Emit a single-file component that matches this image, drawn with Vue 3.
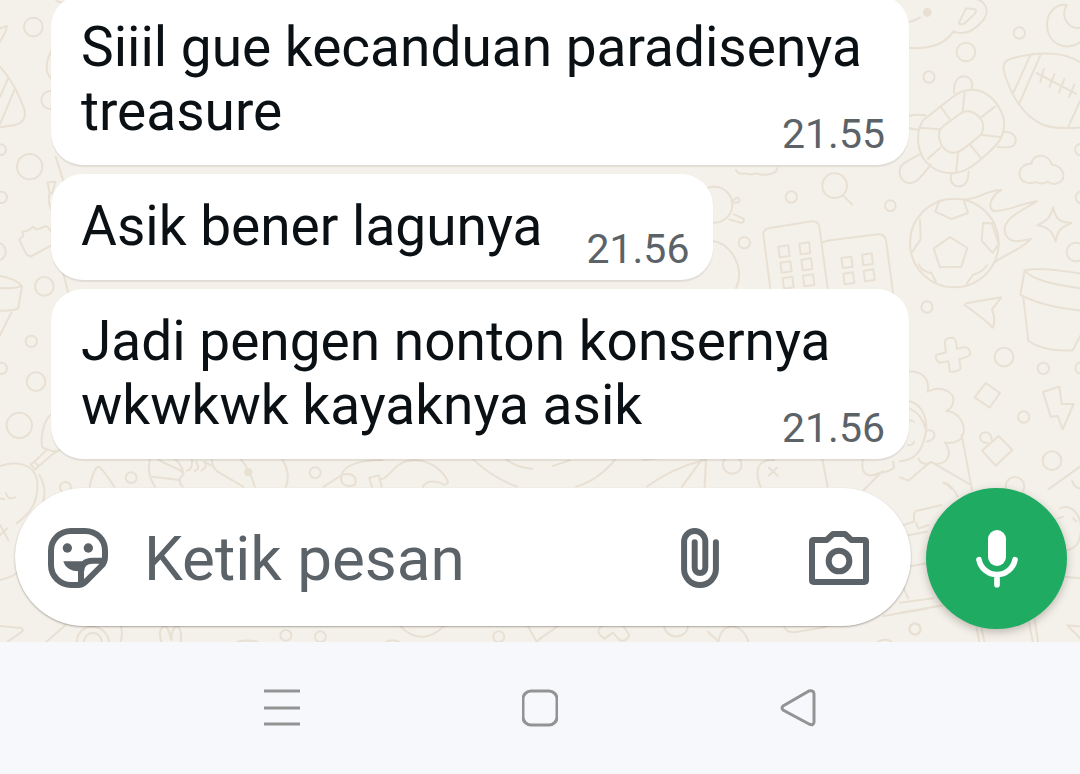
<script setup>
import { ref } from 'vue'

const draft = ref('')
const messages = [
  { id: 1, text: 'Siiil gue kecanduan paradisenya treasure', time: '21.55' },
  { id: 2, text: 'Asik bener lagunya', time: '21.56' },
  { id: 3, text: 'Jadi pengen nonton konsernya wkwkwk kayaknya asik', time: '21.56' },
]
</script>

<template>
  <div class="screen">
    <main class="chat">
      <svg class="wallpaper" viewBox="0 0 1080 642" preserveAspectRatio="xMaxYMax slice" aria-hidden="true">
        <!-- whale, football, moon, turtle, cloud -->
        <g transform="translate(900 0) scale(.33333)">
          <path d="M0 140C60 150 125 145 160 95C205 108 228 85 252 58C270 30 255 5 228 -4M28 65Q48 62 60 52M198 25L226 28Q230 32 224 42L194 70Q182 76 176 70Z" />
          <circle cx="82" cy="37" r="13" class="solid" />
          <circle cx="198" cy="156" r="28" /><circle cx="87" cy="231" r="17" /><circle cx="358" cy="99" r="17" />
          <path d="M500 15C465 10 440 42 441 76C445 145 515 155 550 118M500 15C480 50 505 92 545 82" />
          <path d="M550 195C500 150 405 155 330 177C307 185 308 205 315 225C335 285 365 345 430 375C465 387 505 386 550 382M390 168L341 276M421 166L358 310M410 219L527 281M431 208L421 247M463 222L449 260M493 237L477 277M523 253L507 291M550 282L504 382" />
          <path d="M70 360L155 293C190 265 235 258 275 294C310 330 322 370 304 412C290 440 260 463 230 488C180 530 120 530 80 488C50 455 45 395 70 360Z" />
          <path d="M130 378L182 340C205 325 235 340 247 365C255 392 245 405 218 425L187 449C160 467 137 458 123 432C112 407 115 390 130 378ZM194 277L188 333M122 320L149 357M58 383L118 388M285 320L243 352M247 405L304 412M212 436L241 472M174 460L168 519M121 443L84 476M162 279C160 250 172 229 191 229C215 230 220 251 214 271M308 397C332 392 348 405 347 423C345 442 325 445 294 440M154 522C148 545 160 560 178 559C198 559 205 538 206 514M76 346Q45 342 28 348M28 384Q42 390 56 388M63 461L18 486C-10 500 -5 535 18 547C40 557 58 540 92 494" />
          <path d="M378 547C350 540 348 495 395 490C398 460 445 458 456 494C490 495 505 540 472 550Q455 555 444 545Q425 556 408 546Q393 552 378 547" />
          <circle cx="542" cy="449" r="17" /><circle cx="545" cy="592" r="18" />
        </g>
        <!-- lens, towers, flaming ball -->
        <g transform="translate(700 170) scale(.33333)">
          <circle cx="43" cy="104" r="54" /><circle cx="274" cy="81" r="17" /><circle cx="404" cy="47" r="37" /><path d="M429 76L457 104M100 91C112 75 126 90 115 97L100 98M102 133L130 146Q136 159 120 158L88 148" />
          <circle cx="571" cy="107" r="16" /><circle cx="133" cy="218" r="17" />
          <path d="M108 0Q115 15 135 10Q153 16 170 10Q190 18 210 12Q230 8 232 -5M35 212C98 220 135 300 108 355" />
          <path d="M211 355L190 195Q188 177 210 174L335 154Q354 152 358 170L383 355M370 216L390 211L534 193Q553 192 558 210L580 375" />
          <path d="M235 230l30-4l4 32l-30 4zM298 221l29-4l4 32l-29 4zM241 278l30-4l4 30l-30 4zM304 269l29-4l4 32l-29 4zM248 324l29-4l4 32l-29 4zM309 317l30-4l4 32l-30 4zM424 264l30-4l4 30l-30 4zM486 254l29-4l4 32l-29 4zM430 311l29-4l4 32l-29 4zM491 302l29-4l4 32l-29 4z" />
          <circle cx="763" cy="219" r="133" />
          <path d="M750 201L802 234L784 290L720 292L701 236ZM718 92L706 125L754 147L804 129L792 94M849 159L876 160L896 222L878 249L845 212ZM660 149L662 208L637 245M656 283Q663 302 695 310L708 336M861 286Q850 305 818 315L801 340" />
          <path d="M795 88C840 88 858 59 904 60C875 75 861 111 880 123C925 124 955 102 1011 94C963 122 898 151 917 194C933 225 965 211 994 206C962 240 920 250 885 276" />
          <path d="M1059 112C1067 145 1075 157 1114 159C1080 174 1073 180 1067 214C1055 182 1045 172 1012 166C1042 150 1051 145 1059 112Z" />
        </g>
        <!-- pot, arrow, girl, toys -->
        <g transform="translate(900 200) scale(.33333)">
          <circle cx="528" cy="156" r="28" /><circle cx="81" cy="321" r="17" /><circle cx="312" cy="471" r="28" /><circle cx="430" cy="505" r="17" /><circle cx="543" cy="504" r="17" /><circle cx="371" cy="651" r="17" /><circle cx="456" cy="782" r="28" /><circle cx="345" cy="859" r="28" />
          <path d="M374 211C430 200 500 215 550 222M374 211C400 245 480 255 550 267M374 211L361 285C430 318 490 327 550 332M370 292L385 423C425 450 475 454 518 451L550 390" />
          <path d="M198 310L304 292L276 328Q288 355 279 383Q250 355 194 315" />
          <path d="M134 424Q138 412 158 413Q169 415 171 447L193 441Q210 442 211 462Q202 474 178 477L182 506Q170 518 150 515L145 484L116 488Q103 474 109 465L138 457ZM257 549L300 579L269 623L224 592ZM429 576L478 560L485 612L521 612L488 688L473 648L452 650Z" />
          <path d="M296 708L337 750L287 797L246 752ZM263 728C240 730 235 707 246 700C262 690 276 705 275 721" />
          <path d="M28 515C68 512 90 540 83 575C125 554 170 578 158 610Q156 625 139 633C195 638 207 710 170 724Q150 732 135 727C165 775 130 800 95 787Q65 800 55 775M28 603C70 615 85 660 76 705C65 755 45 780 0 784M28 625Q66 642 76 685M80 692C108 685 115 720 80 725M28 660L42 665M24 735Q40 737 42 725M0 832L25 842L92 785L210 853M185 704L216 870M130 849Q145 853 155 867M445 868L540 800M516 843Q525 865 540 865" />
        </g>
        <!-- left margin -->
        <g transform="scale(.33333)">
          <circle cx="100" cy="81" r="28" /><circle cx="89" cy="500" r="38" /><circle cx="133" cy="859" r="28" /><circle cx="94" cy="1024" r="17" /><circle cx="108" cy="1145" r="28" /><circle cx="58" cy="1276" r="38" /><circle cx="2" cy="449" r="16" /><circle cx="4" cy="592" r="17" /><circle cx="-10" cy="755" r="27" /><circle cx="4" cy="1105" r="17" /><circle cx="151" cy="300" r="27" />
          <path d="M0 85L20 78Q22 90 0 124M0 200Q45 250 72 325C80 350 70 368 45 375L0 382M24 236L0 290M44 268L0 372M155 150Q125 210 155 237M168 0Q180 12 200 5" />
          <path d="M143 547L166 545L157 580L149 579ZM149 580Q140 610 160 635M167 470L190 543L220 535M68 695Q85 693 100 680L109 689L139 678Q158 690 165 730L92 770L80 764L58 720Q60 713 69 709ZM190 820L205 880L240 870" />
          <path d="M0 828Q45 835 66 858L55 924Q45 933 0 932M66 858Q40 867 0 864M34 938L0 1005M155 1242C128 1260 120 1325 128 1343L159 1354L180 1350M92 1393L103 1385L116 1399L106 1409ZM103 1385L140 1350M116 1399L157 1363L180 1350M0 1398C60 1380 105 1395 112 1445C115 1510 90 1540 50 1570M118 1425Q145 1470 125 1520" />
          <path d="M18 1480Q24 1502 45 1492M0 1495L12 1498M0 1575L25 1620M0 1605L22 1585M0 1740Q45 1730 60 1710" />
        </g>
        <!-- strip above the text box -->
        <g transform="translate(0 455) scale(.34444 .33333)">
          <circle cx="381" cy="68" r="16" /><circle cx="915" cy="53" r="16" /><circle cx="721" cy="52" r="12" class="solid" /><circle cx="190" cy="97" r="16" />
          <path d="M260 95Q275 30 288 36Q300 45 332 95M435 14Q425 55 450 95M460 14C490 35 530 40 533 58L522 70Q520 85 530 95M490 0Q528 20 533 58M443 65L522 75M542 47Q560 45 557 14M565 47Q583 45 570 20M585 47Q605 35 592 20L612 31M615 14Q615 42 640 55L706 95M700 14Q725 45 740 95M820 14Q845 55 830 95" />
          <path d="M940 95L992 60C1000 25 1060 15 1110 15M992 60C985 90 1010 100 1030 89C1040 65 1020 50 992 60M1072 68L1100 61L1108 95M1072 68L1080 95M1108 72C1135 65 1145 20 1195 16C1250 12 1290 50 1301 82C1295 93 1285 90 1278 83Q1240 72 1228 95M1375 14C1410 50 1450 75 1500 95M1470 14Q1505 40 1545 41" />
        </g>
        <g transform="translate(540 455) scale(.34444 .33333)">
          <circle cx="558" cy="29" r="27" />
          <path d="M38 33L85 16M218 14Q170 75 105 95M300 14L340 10M480 14Q380 40 310 95M470 14L412 95M482 14L478 95M680 15C635 12 620 40 640 95M665 38L690 62M688 38L664 62M820 14L835 95M937 14C930 60 955 70 985 54Q1015 50 1028 38L1025 20M995 48L940 105M1175 83Q1195 90 1213 125" />
        </g>
        <!-- strip below the text box -->
        <g transform="translate(0 610) scale(.34444 .33333)">
          <circle cx="830" cy="76" r="16" /><circle cx="930" cy="80" r="16" /><circle cx="1448" cy="80" r="16" />
          <path d="M0 48L62 54Q72 60 60 68L22 95M135 95L190 45M223 95C225 35 310 35 316 95M243 95C250 60 290 60 296 95M350 45Q358 70 350 95M468 95Q458 60 475 49Q488 45 497 90Q500 45 517 50Q530 65 524 95M690 95Q720 88 748 95M1122 95Q1140 86 1158 95M1160 47Q1225 115 1290 47M1532 47L1558 95L1575 80" />
        </g>
        <g transform="translate(540 610) scale(.33333)">
          <circle cx="1125" cy="57" r="16" />
          <path d="M0 86L54 48M186 48C165 65 178 75 194 86L219 68L239 90Q258 98 268 75L250 48M372 48C378 90 440 90 444 48M503 65L536 95C540 38 605 30 625 95M732 48Q738 68 765 67L860 50M1030 18L1160 -4M1015 95Q1035 84 1055 95" />
        </g>
        <!-- around the voice button -->
        <g transform="translate(900 470) scale(.33333)">
          <path d="M10 165L42 155V135Q43 122 58 121L125 105M48 158L55 176L85 165M0 200L80 185M0 295L80 280M0 330L25 385M0 398L100 385M0 428L135 405M230 475L238 515M245 475L253 515M388 460L398 515M404 450L414 515M502 466L550 470M502 466L550 515M480 115C510 100 545 130 543 180C540 225 520 240 495 240M475 145L490 140M520 145L530 155M495 320L540 325" />
          <circle cx="45" cy="477" r="17" />
        </g>
      </svg>

      <ol class="messages">
        <li v-for="message in messages" :key="message.id" class="bubble">
          {{ message.text }}<time class="stamp">{{ message.time }}</time>
        </li>
      </ol>

      <form class="composer" @submit.prevent>
        <div class="field">
          <button type="button" class="tool" aria-label="Stiker">
            <svg width="60" height="60" viewBox="144 176 180 180">
              <path class="line" d="M213 347C180 347 153 320 153 287V244C153 211 180 185 213 185H255C290 185 315 211 315 244V262C315 274 312 282 304 290L258 336C250 344 244 347 234 347ZM314 274H278C255 274 243 286 243 308V346" />
              <path class="fill" d="M190 276H254L238 306C212 306 196 296 190 276Z" />
              <circle class="fill" cx="202" cy="236" r="14" />
              <circle class="fill" cx="265" cy="236" r="14" />
            </svg>
          </button>
          <input v-model="draft" class="entry" type="text" placeholder="Ketik pesan" aria-label="Ketik pesan" />
          <button type="button" class="tool" aria-label="Lampirkan">
            <svg width="38" height="60" viewBox="124 79 114 181">
              <path class="line" stroke-linecap="round" d="M229 122V203A48 48 0 0 1 133 203V120A32 32 0 0 1 197 120V199A16 16 0 0 1 165 199V122" />
            </svg>
          </button>
          <button type="button" class="tool camera" aria-label="Kamera">
            <svg width="60" height="54" viewBox="507 95 180 162">
              <path class="line" d="M521 122H560L579 104H615L634 122H673Q678 122 678 127V243Q678 248 673 248H521Q516 248 516 243V127Q516 122 521 122Z" />
              <circle class="line" cx="597" cy="185" r="31" />
            </svg>
          </button>
        </div>
        <button type="button" class="voice" aria-label="Pesan suara">
          <svg width="42" height="58" viewBox="228 176 126 174">
            <rect x="264" y="176" width="54" height="108" rx="27" fill="#fff" />
            <path d="M237 265A55 55 0 0 0 345 265M291 310V340" fill="none" stroke="#fff" stroke-width="17" stroke-linecap="round" />
          </svg>
        </button>
      </form>
    </main>

    <nav class="system" aria-label="Navigasi sistem">
      <button type="button" class="key" aria-label="Aplikasi terbaru">
        <svg width="36" height="38" viewBox="0 0 36 38"><path d="M0 2H36M0 19H36M0 35H36" /></svg>
      </button>
      <button type="button" class="key" aria-label="Beranda">
        <svg width="36" height="38" viewBox="0 0 36 38"><rect x="1" y="2" width="34" height="34" rx="8" /></svg>
      </button>
      <button type="button" class="key" aria-label="Kembali">
        <svg width="36" height="38" viewBox="0 0 36 38"><path d="M3 17L29 2Q34 1 34 5V33Q34 37 29 35L3 21Q1 19 3 17Z" /></svg>
      </button>
    </nav>
  </div>
</template>

<style>
body {
  margin: 0;
}
</style>

<style scoped>
.screen {
  display: flex;
  flex-direction: column;
  height: 100vh;
  font-family: Roboto, "Liberation Sans", sans-serif;
  background: #f6f8fb;
}
.chat {
  position: relative;
  flex: 1;
  min-height: 0;
  display: flex;
  flex-direction: column;
  justify-content: flex-end;
  overflow: hidden;
  background: #f4f1ea;
}
.wallpaper {
  position: absolute;
  inset: 0;
  width: 100%;
  height: 100%;
  fill: none;
  stroke: #e9e0d4;
  stroke-width: 6;
  stroke-linejoin: round;
  stroke-linecap: round;
}
.wallpaper .solid {
  fill: #e9e0d4;
  stroke: none;
}
.messages {
  position: relative;
  display: flex;
  flex-direction: column;
  align-items: flex-start;
  gap: 9px;
  margin: 0;
  padding: 0 171px 29px 51px;
  list-style: none;
}
.bubble {
  display: flow-root;
  padding: 20px 24px 8px 30px;
  border-radius: 32px;
  background: #fff;
  box-shadow: 0 2px 1px rgba(60, 50, 40, 0.1);
  color: #0a1014;
  font-size: 55px;
  line-height: 64px;
}
.stamp {
  float: right;
  margin: 32px 0 0 44px;
  color: #5b6368;
  font-size: 41px;
  line-height: 46px;
}
.composer {
  position: relative;
  display: flex;
  align-items: flex-start;
  gap: 15px;
  padding: 0 13px 13px 15px;
}
.field {
  flex: 1;
  min-width: 0;
  box-sizing: border-box;
  height: 138px;
  display: flex;
  align-items: center;
  padding: 2px 42px 0 33px;
  border-radius: 69px;
  background: #fff;
  box-shadow: 0 1px 2px rgba(60, 50, 40, 0.4);
}
.tool,
.voice,
.key {
  display: flex;
  flex: none;
  align-items: center;
  justify-content: center;
  padding: 0;
  border: 0;
  background: none;
}
.camera {
  margin-left: 90px;
}
.line {
  fill: none;
  stroke: #5b6368;
  stroke-width: 18;
  stroke-linejoin: round;
}
.fill {
  fill: #5b6368;
}
.entry {
  flex: 1;
  min-width: 0;
  height: 80px;
  padding: 0 0 0 36px;
  border: 0;
  outline: 0;
  background: none;
  color: #0a1014;
  font-family: inherit;
  font-size: 62px;
}
.entry::placeholder {
  color: #5b6368;
  opacity: 1;
}
.voice {
  width: 141px;
  height: 141px;
  border-radius: 50%;
  background: #1fab61;
  box-shadow: 0 3px 8px rgba(60, 50, 40, 0.3);
}
.system {
  display: flex;
  flex: none;
  align-items: center;
  justify-content: center;
  gap: 222px;
  height: 132px;
}
.key svg {
  fill: none;
  stroke: #939393;
  stroke-width: 3;
}
</style>
